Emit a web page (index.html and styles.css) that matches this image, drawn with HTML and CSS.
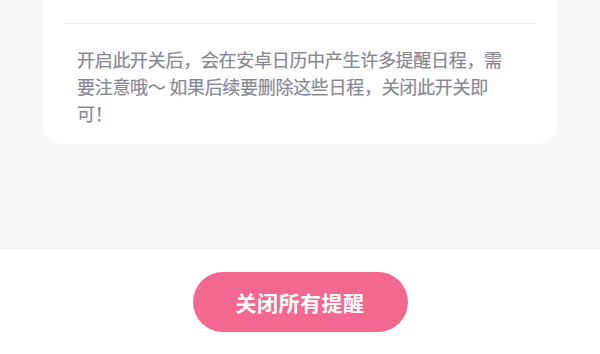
FILE: index.html
```html
<!DOCTYPE html>
<html lang="zh-CN">
<head>
<meta charset="utf-8">
<title>提醒设置</title>
<link rel="stylesheet" href="styles.css">
</head>
<body>
<main class="content">
  <section class="card">
    <div class="divider"></div>
    <p class="note">开启此开关后，会在安卓日历中产生许多提醒日程，需要注意哦～ 如果后续要删除这些日程，关闭此开关即可！</p>
  </section>
</main>
<footer class="footer">
  <button class="btn" type="button">关闭所有提醒</button>
</footer>
</body>
</html>
```

FILE: styles.css
```css
html, body {
  margin: 0;
  padding: 0;
}
body {
  width: 600px;
  height: 354px;
  overflow: hidden;
  background: #ffffff;
  font-family: "Noto Sans CJK SC", "Noto Sans", sans-serif;
}
.content {
  height: 248px;
  box-sizing: border-box;
  padding: 0 43px;
  background: #f7f8fa;
}
.card {
  background: #ffffff;
  border-radius: 0 0 20px 20px;
  padding: 23px 22px 17px;
}
.divider {
  height: 1px;
  background: #eceef1;
}
.note {
  margin: 22px 0 0;
  padding: 0 18px 0 12px;
  font-size: 18px;
  line-height: 27px;
  letter-spacing: -0.3px;
  color: #858894;
  -webkit-text-stroke: 0.2px #858894;
}
.footer {
  border-top: 1px solid #eff0f2;
  display: flex;
  justify-content: center;
  padding-top: 23px;
}
.btn {
  width: 215px;
  height: 60px;
  border: none;
  border-radius: 30px;
  background: #f3688f;
  color: #ffffff;
  font-family: "Noto Sans CJK SC", "Noto Sans", sans-serif;
  font-size: 21px;
  font-weight: 700;
  letter-spacing: 0.5px;
  display: flex;
  align-items: center;
  justify-content: center;
  padding: 0;
}
```
